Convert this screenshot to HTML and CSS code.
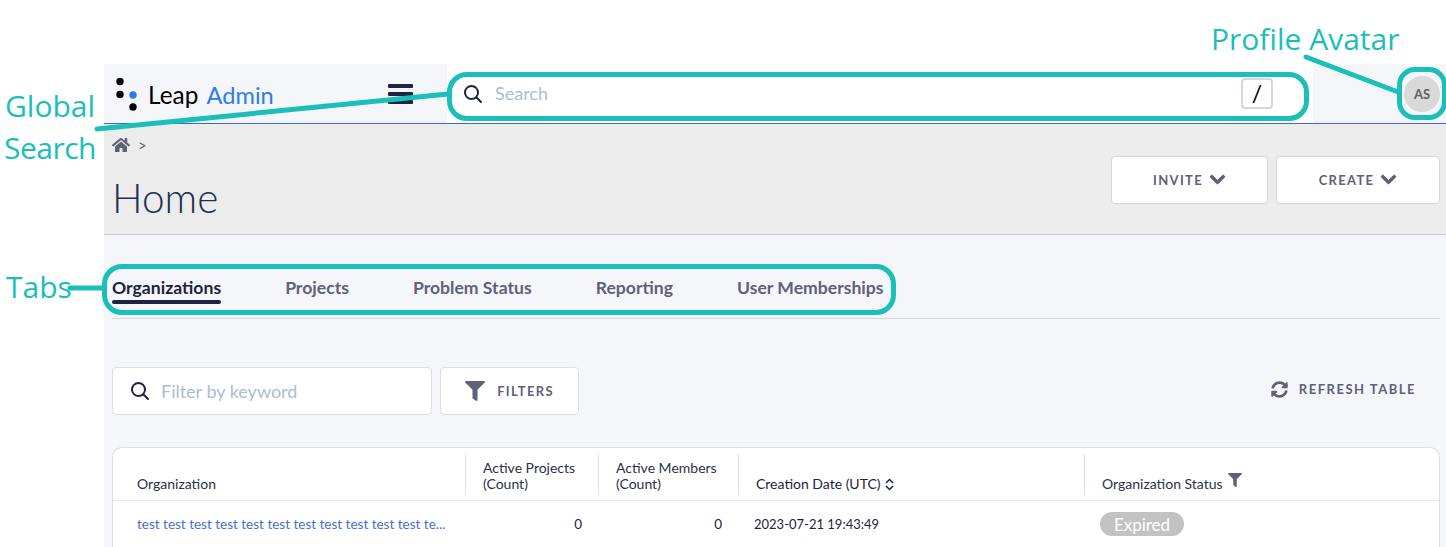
FILE: index.html
```html
<!DOCTYPE html>
<html lang="en">
<head>
    <title>Leap Admin</title>
    <meta charset="UTF-8">
    <link rel="stylesheet" href="styles.css">
</head>
<body>
    <div id="app">
        <header class="topbar">
            <div class="brand">
                <svg class="logo" width="24" height="36" viewBox="0 0 24 36">
                    <circle cx="5" cy="4.5" r="3.7" fill="#000"/>
                    <circle cx="5" cy="17.5" r="3.7" fill="#000"/>
                    <circle cx="18" cy="18" r="3.7" fill="#2b7de9"/>
                    <circle cx="18" cy="30" r="3.7" fill="#000"/>
                </svg>
                <span class="brand-name">Leap <span class="brand-accent">Admin</span></span>
                <svg class="burger" width="26" height="20" viewBox="0 0 26 20">
                    <rect x="0" y="0" width="25" height="4" rx="1" fill="#1d2340"/>
                    <rect x="0" y="8" width="25" height="4" rx="1" fill="#1d2340"/>
                    <rect x="0" y="16" width="25" height="4" rx="1" fill="#1d2340"/>
                </svg>
            </div>
            <div class="global-search">
                <svg class="search-icon" width="20" height="20" viewBox="0 0 20 20">
                    <circle cx="8.5" cy="8.5" r="6.5" fill="none" stroke="#1d2340" stroke-width="2"/>
                    <path d="M13.5 13.5L18 18" stroke="#1d2340" stroke-width="2" stroke-linecap="round"/>
                </svg>
                <span class="placeholder">Search</span>
                <span class="key">/</span>
            </div>
            <div class="profile">
                <div class="avatar">AS</div>
            </div>
        </header>

        <section class="page-head">
            <div class="head-left">
                <div class="crumbs">
                    <svg width="18" height="16" viewBox="0 0 576 512"><path fill="#5f6178" d="M280.37 148.26L96 300.11V464a16 16 0 0 0 16 16l112.06-.29a16 16 0 0 0 15.92-16V368a16 16 0 0 1 16-16h64a16 16 0 0 1 16 16v95.64a16 16 0 0 0 16 16.05L464 480a16 16 0 0 0 16-16V300L295.67 148.26a12.19 12.19 0 0 0-15.3 0zM571.6 251.47L488 182.56V44.05a12 12 0 0 0-12-12h-56a12 12 0 0 0-12 12v72.61L318.47 43a48 48 0 0 0-61 0L4.34 251.47a12 12 0 0 0-1.6 16.9l25.5 31A12 12 0 0 0 45.15 301l235.22-193.74a12.19 12.19 0 0 1 15.3 0L530.9 301a12 12 0 0 0 16.9-1.6l25.5-31a12 12 0 0 0-1.7-16.93z"/></svg>
                    <span class="crumb-sep">&gt;</span>
                </div>
                <h1>Home</h1>
            </div>
            <div class="head-actions">
                <button class="btn btn-invite">INVITE
                    <svg class="chevron" width="17" height="17" viewBox="0 0 448 512"><path fill="#5f6178" stroke="#5f6178" stroke-width="30" d="M207.029 381.476L12.686 187.132c-9.373-9.373-9.373-24.569 0-33.941l22.667-22.667c9.357-9.357 24.522-9.375 33.901-.04L224 284.505l154.745-154.021c9.379-9.335 24.544-9.317 33.901.04l22.667 22.667c9.373 9.373 9.373 24.569 0 33.941L240.971 381.476c-9.373 9.372-24.569 9.372-33.942 0z"/></svg>
                </button>
                <button class="btn btn-create">CREATE
                    <svg class="chevron" width="17" height="17" viewBox="0 0 448 512"><path fill="#5f6178" stroke="#5f6178" stroke-width="30" d="M207.029 381.476L12.686 187.132c-9.373-9.373-9.373-24.569 0-33.941l22.667-22.667c9.357-9.357 24.522-9.375 33.901-.04L224 284.505l154.745-154.021c9.379-9.335 24.544-9.317 33.901.04l22.667 22.667c9.373 9.373 9.373 24.569 0 33.941L240.971 381.476c-9.373 9.372-24.569 9.372-33.942 0z"/></svg>
                </button>
            </div>
        </section>

        <main class="content">
            <nav class="tabs">
                <a class="tab tab-active">Organizations</a>
                <a class="tab">Projects</a>
                <a class="tab">Problem Status</a>
                <a class="tab">Reporting</a>
                <a class="tab">User Memberships</a>
            </nav>

            <div class="toolbar">
                <div class="keyword">
                    <svg width="20" height="20" viewBox="0 0 20 20">
                        <circle cx="8.5" cy="8.5" r="6.5" fill="none" stroke="#1d2340" stroke-width="2"/>
                        <path d="M13.5 13.5L18 18" stroke="#1d2340" stroke-width="2" stroke-linecap="round"/>
                    </svg>
                    <span class="placeholder">Filter by keyword</span>
                </div>
                <button class="btn btn-filters">
                    <svg width="20" height="20" viewBox="0 0 512 512"><path fill="#5f6178" d="M487.976 0H24.028C2.71 0-8.047 25.866 7.058 40.971L192 225.941V432c0 7.831 3.821 15.17 10.237 19.662l80 55.98C298.02 518.69 320 507.493 320 487.98V225.941l184.947-184.97C520.021 25.896 509.338 0 487.976 0z"/></svg>
                    FILTERS
                </button>
                <div class="refresh">
                    <svg width="17" height="17" viewBox="0 0 512 512"><path fill="#5f6178" d="M370.72 133.28C339.458 104.008 298.888 87.962 255.848 88c-77.458.068-144.328 53.178-162.791 126.85-1.344 5.363-6.122 9.15-11.651 9.15H24.103c-7.498 0-13.194-6.807-11.807-14.176C33.933 94.924 134.813 8 256 8c66.448 0 126.791 26.136 171.315 68.685L463.03 40.97C478.149 25.851 504 36.559 504 57.941V192c0 13.255-10.745 24-24 24H345.941c-21.382 0-32.09-25.851-16.971-40.971l41.75-41.749zM32 296h134.059c21.382 0 32.09 25.851 16.971 40.971l-41.75 41.75c31.262 29.273 71.835 45.319 114.876 45.28 77.418-.07 144.315-53.144 162.787-126.849 1.344-5.363 6.122-9.15 11.651-9.15h57.304c7.498 0 13.194 6.807 11.807 14.176C478.067 417.076 377.187 504 256 504c-66.448 0-126.791-26.136-171.315-68.685L48.97 471.03C33.851 486.149 8 475.441 8 454.059V320c0-13.255 10.745-24 24-24z"/></svg>
                    REFRESH TABLE
                </div>
            </div>

            <div class="card">
                <div class="row row-head">
                    <div class="cell cell-org">Organization</div>
                    <div class="cell">Active Projects<br>(Count)</div>
                    <div class="cell">Active Members<br>(Count)</div>
                    <div class="cell cell-low cell-sort">Creation Date (UTC)
                        <svg width="9" height="13" viewBox="0 0 9 13"><path d="M1 5l3.5-3.5L8 5M1 8l3.5 3.5L8 8" fill="none" stroke="#1d2340" stroke-width="1.5"/></svg>
                    </div>
                    <div class="cell cell-low">Organization Status
                        <svg class="th-filter" width="14" height="14" viewBox="0 0 512 512"><path fill="#5f6178" d="M487.976 0H24.028C2.71 0-8.047 25.866 7.058 40.971L192 225.941V432c0 7.831 3.821 15.17 10.237 19.662l80 55.98C298.02 518.69 320 507.493 320 487.98V225.941l184.947-184.97C520.021 25.896 509.338 0 487.976 0z"/></svg>
                    </div>
                </div>
                <div class="row row-body">
                    <div class="td td-link">test test test test test test test test test test test te...</div>
                    <div class="td td-num">0</div>
                    <div class="td td-num">0</div>
                    <div class="td td-date">2023-07-21 19:43:49</div>
                    <div class="td td-status"><span class="pill">Expired</span></div>
                </div>
            </div>
        </main>
    </div>

    <!-- callouts drawn over the screenshot -->
    <div class="callouts">
        <div class="label label-search">Global<br><span class="label-tight">Search</span></div>
        <div class="label label-tabs">Tabs</div>
        <div class="label label-profile">Profile Avatar</div>
        <div class="ring ring-search"></div>
        <div class="ring ring-tabs"></div>
        <div class="ring ring-avatar"></div>
        <svg class="lines" width="1446" height="547" viewBox="0 0 1446 547">
            <path d="M97 129L448 94M70 288H102M1306 57L1398 92" fill="none" stroke="#1abfb9" stroke-width="5" stroke-linecap="round"/>
        </svg>
    </div>
</body>
</html>
```

FILE: styles.css
```css
html, body {
    margin: 0;
    padding: 0;
    height: 547px;
    overflow: hidden;
    background: #fff;
}

body {
    font-family: "Lato", sans-serif;
    color: #1d2340;
}

#app {
    margin-left: 104px;
    padding-top: 64px;
}

/* top bar */
.topbar {
    display: flex;
    height: 59px;
    background: #f5f6fa;
    border-bottom: 1px solid #3f66d8;
}

.brand {
    display: flex;
    align-items: center;
    width: 343px;
    box-sizing: border-box;
    padding-left: 11px;
}

.logo {
    margin-top: 2px;
}

.brand-name {
    font-size: 24.4px;
    color: #000;
    margin-left: 9px;
    margin-top: 1px;
}

.brand-accent {
    color: #2b7de9;
    font-size: 23.6px;
    margin-left: 2px;
}

.burger {
    margin-left: 114px;
}

.global-search {
    display: flex;
    align-items: center;
    width: 866px;
    box-sizing: border-box;
    padding: 0 40px 0 16px;
    background: #fff;
}

.search-icon {
    margin-right: 12px;
}

.placeholder {
    font-size: 18px;
    color: #aebcd2;
    margin-top: -1px;
}

.key {
    margin-left: auto;
    width: 32px;
    height: 31px;
    box-sizing: border-box;
    border: 2px solid #d5d5e5;
    border-radius: 4px;
    text-align: center;
    font-size: 23px;
    line-height: 26px;
    color: #000;
}

.profile {
    flex: 1;
    display: flex;
    align-items: center;
    justify-content: flex-end;
    padding-right: 6px;
}

.avatar {
    width: 36px;
    height: 36px;
    border-radius: 50%;
    background: #d9d9d9;
    color: #5f5f5f;
    font-size: 13px;
    font-weight: 700;
    line-height: 36px;
    text-align: center;
}

/* page header */
.page-head {
    display: flex;
    justify-content: space-between;
    height: 110px;
    background: #ececec;
    border-bottom: 1px solid #c9c9d2;
    padding: 0 6px 0 8px;
}

.crumbs {
    display: flex;
    align-items: center;
    gap: 8px;
    padding-top: 13px;
    height: 16px;
}

.crumb-sep {
    font-size: 15px;
    color: #5f6178;
}

h1 {
    margin: 22px 0 0 0;
    font-size: 40.5px;
    font-weight: 300;
    line-height: 46px;
    color: #1c3050;
}

.head-actions {
    display: flex;
    gap: 8px;
    padding-top: 32px;
}

.btn {
    display: flex;
    align-items: center;
    justify-content: center;
    gap: 6px;
    height: 48px;
    box-sizing: border-box;
    background: #fff;
    border: 1px solid #d5d5e5;
    border-radius: 4px;
    font-family: inherit;
    font-size: 13px;
    font-weight: 700;
    letter-spacing: 1.3px;
    color: #5f6178;
}

.chevron {
    margin-top: -2px;
}

.btn-invite {
    width: 157px;
}

.btn-create {
    width: 164px;
}

/* tabs */
.content {
    padding: 0 6px 0 8px;
    background: #f5f6fa;
    height: 312px;
}

.tabs {
    display: flex;
    gap: 64px;
    height: 84px;
    box-sizing: border-box;
    padding-top: 42px;
    border-bottom: 1px solid #d5d5e5;
}

.tab {
    position: relative;
    font-size: 17.6px;
    font-weight: 700;
    line-height: 22px;
    color: #5f6178;
}

.tab-active {
    color: #1d2340;
}

.tab-active::after {
    content: "";
    position: absolute;
    left: 0;
    right: 0;
    top: 23px;
    height: 4px;
    border-radius: 2px;
    background: #1d2340;
}

/* toolbar */
.toolbar {
    display: flex;
    align-items: center;
    gap: 8px;
    margin-top: 48px;
}

.keyword {
    display: flex;
    align-items: center;
    gap: 11px;
    width: 320px;
    height: 48px;
    box-sizing: border-box;
    padding-left: 17px;
    background: #fff;
    border: 1px solid #dcdde6;
    border-radius: 4px;
}

.btn-filters {
    width: 139px;
    gap: 12px;
    border-color: #dcdde6;
}

.refresh {
    display: flex;
    align-items: center;
    gap: 11px;
    margin-left: auto;
    margin-right: 24px;
    margin-bottom: 4px;
    font-size: 13px;
    font-weight: 700;
    letter-spacing: 1.5px;
    color: #5f6178;
}

/* table */
.card {
    margin-top: 32px;
    height: 100px;
    box-sizing: border-box;
    background: #fff;
    border: 1px solid #dcdde6;
    border-bottom: 0;
    border-radius: 10px 10px 0 0;
}

.row {
    display: grid;
    grid-template-columns: 352px 133px 140px 346px 1fr;
}

.row-head {
    height: 53px;
    box-sizing: border-box;
    padding-top: 6px;
    border-bottom: 1px solid #e6e7ee;
}

.cell {
    height: 41px;
    box-sizing: border-box;
    padding: 6px 8px 0 17px;
    border-left: 1px solid #dcdde6;
    font-size: 14px;
    line-height: 16px;
    color: #2c3048;
    white-space: nowrap;
}

.cell-org {
    border-left: 0;
    padding: 22px 0 0 24px;
}

.cell-low {
    padding-top: 22px;
}

.cell-sort {
    color: #1d2340;
}

.cell-sort svg {
    vertical-align: -2px;
    margin-left: 1px;
}

.th-filter {
    vertical-align: 2px;
    margin: -6px 0 0 2px;
}

.row-body {
    align-items: center;
    height: 45px;
}

.td {
    font-size: 13.5px;
    white-space: nowrap;
}

.td-link {
    padding-left: 24px;
    color: #4a6fd0;
}

.td-num {
    text-align: right;
    padding-right: 16px;
}

.td-date {
    font-size: 13px;
    padding-left: 16px;
}

.td-status {
    padding-left: 16px;
}

.pill {
    display: block;
    width: 84px;
    height: 24px;
    border-radius: 12px;
    background: #c2c2c2;
    color: #fff;
    font-size: 17px;
    line-height: 25px;
    text-align: center;
}

/* callouts */
.callouts {
    position: absolute;
    left: 0;
    top: 0;
    width: 1446px;
    height: 547px;
    pointer-events: none;
}

.lines {
    position: absolute;
    left: 0;
    top: 0;
}

.ring {
    position: absolute;
    box-sizing: border-box;
    border: 5px solid #1abfb9;
    border-radius: 20px;
}

.ring-search {
    left: 447px;
    top: 72px;
    width: 862px;
    height: 49px;
}

.ring-tabs {
    left: 102px;
    top: 264px;
    width: 794px;
    height: 51px;
}

.ring-avatar {
    left: 1397px;
    top: 67px;
    width: 50px;
    height: 53px;
    border-radius: 18px;
}

.label {
    position: absolute;
    font-family: "Open Sans", sans-serif;
    font-size: 30px;
    line-height: 42px;
    color: #1abfb9;
}

.label-tight {
    letter-spacing: -0.5px;
    margin-left: -1px;
}

.label-search {
    left: 5px;
    top: 85px;
}

.label-tabs {
    left: 6px;
    top: 266px;
}

.label-profile {
    left: 1211px;
    top: 18px;
}
```
